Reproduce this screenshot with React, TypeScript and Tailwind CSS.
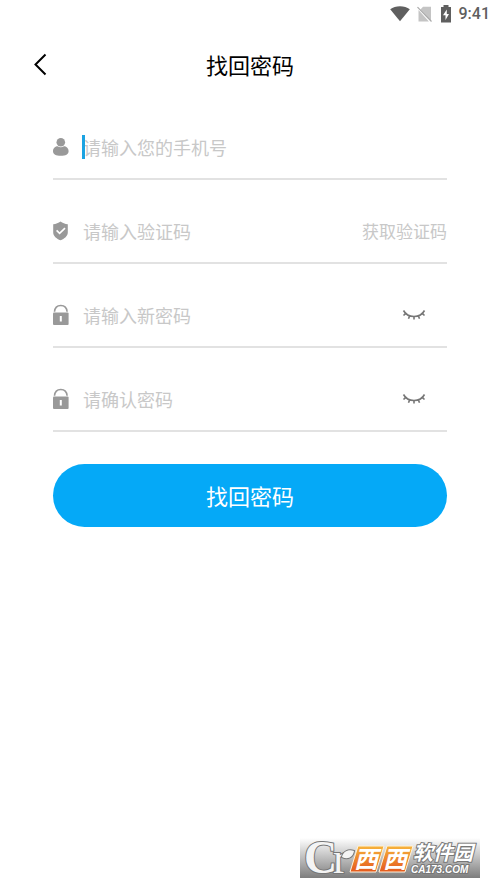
import React, { useState } from "react";

const UserIcon = () => (
  <svg viewBox="0 0 16 20" className="h-5 w-4" fill="#999999" aria-hidden="true">
    <circle cx="7.8" cy="5.2" r="4.3" />
    <path d="M0 14.200C0 10.900 2.600 9.300 4.600 9.200c2 1.300 4.400 1.300 6.400 0 2 .1 4.600 1.700 4.600 5 0 2.900-3 4.600-7.800 4.600S0 17.100 0 14.200Z" />
  </svg>
);

const ShieldIcon = () => (
  <svg viewBox="0 0 16 20" className="h-5 w-4" aria-hidden="true">
    <path
      d="M7.500.5c2 1.500 4.500 2.500 7.300 2.700v8.200c0 3.600-3.300 6.100-7.300 7.900C3.500 17.500.2 15 .2 11.400V3.200C3 3 5.500 2 7.500.5Z"
      fill="#999999"
    />
    <path d="m3.600 9.400 3 3 5.400-5.200" fill="none" stroke="#fff" strokeWidth="1.600" />
  </svg>
);

const LockIcon = () => (
  <svg viewBox="0 0 16 22" className="h-[22px] w-4" aria-hidden="true">
    <path
      d="M1.500 7.800C1.800 3.800 4.300 1.500 7.800 1.500s6 2.300 6.300 6.300"
      fill="none"
      stroke="#999999"
      strokeWidth="1.600"
    />
    <rect x="0" y="8.500" width="15.600" height="12.500" rx="1" fill="#999999" />
    <rect x="6.800" y="12" width="2" height="5.500" fill="#fff" />
  </svg>
);

const ClosedEyeIcon = () => (
  <svg
    viewBox="0 0 24 14"
    className="h-[14px] w-6"
    fill="none"
    stroke="#777777"
    strokeWidth="1.600"
    aria-hidden="true"
  >
    <path d="M1.500 2.500C3.500 6.200 7.500 8.500 12 8.500s8.500-2.300 10.500-6" />
    <path d="M3.800 5.300 1.500 7.500M7.800 7.500 6.500 10.700M12 8.500v3M16.200 7.500l1.300 3.200M20.200 5.300 22.500 7.500" />
  </svg>
);

const StatusBar = () => (
  <div className="flex h-7 items-center justify-end pr-[10px] text-[#5f5f5f]">
    <svg viewBox="0 0 20 16" className="mr-[7px] h-4 w-5" fill="currentColor" aria-hidden="true">
      <path d="M10 15.300.2 3.200C2.900 1.200 6.200.2 10 .2s7.100 1 9.800 3L10 15.300Z" />
    </svg>
    <svg viewBox="0 0 16 16" className="mr-[7px] h-4 w-4" aria-hidden="true">
      <path d="M3.500 3.500 6 .8h8v14.400L3.500 3.500ZM1.500 4l10.400 11.400H1.500V4Z" fill="#c4c4c4" />
      <path d="m.5 1.200 14 14.300" stroke="#aaaaaa" strokeWidth="1.200" />
    </svg>
    <svg viewBox="0 0 12 18" className="mr-[7px] h-[18px] w-3" aria-hidden="true">
      <path d="M3.500 0h5v2H11v15.500H1V2h2.500V0Z" fill="currentColor" />
      <path d="M6.800 4.500 3 10.300h2.500V15L9 9H6.800V4.500Z" fill="#fff" />
    </svg>
    <span className="font-['Roboto',sans-serif] text-base font-medium">9:41</span>
  </div>
);

type FieldProps = {
  id: string;
  type: string;
  placeholder: string;
  icon: React.ReactNode;
  caret?: boolean;
  children?: React.ReactNode;
};

const Field = ({ id, type, placeholder, icon, caret, children }: FieldProps) => {
  const [value, setValue] = useState("");

  return (
    <div className="flex h-16 items-center border-b-2 border-[#e2e2e2]">
      <label htmlFor={id} aria-label={placeholder} className="mr-[14px] shrink-0">
        {icon}
      </label>
      <div className="relative min-w-0 flex-1">
        <input
          id={id}
          type={type}
          value={value}
          onChange={(e) => setValue(e.target.value)}
          placeholder={placeholder}
          className="block w-full bg-transparent text-lg text-[#333333] outline-none placeholder:text-[#c8c8c8]"
        />
        {caret && !value && (
          <span className="pointer-events-none absolute inset-y-[2px] -left-px w-[3px] bg-[#1ba3e2]" />
        )}
      </div>
      {children}
    </div>
  );
};

const PasswordField = (props: { id: string; placeholder: string }) => {
  const [visible, setVisible] = useState(false);

  return (
    <Field {...props} type={visible ? "text" : "password"} icon={<LockIcon />}>
      <button
        type="button"
        aria-label="显示密码"
        aria-pressed={visible}
        onClick={() => setVisible((prev) => !prev)}
        className="mr-[21px]"
      >
        <ClosedEyeIcon />
      </button>
    </Field>
  );
};

const SiteLogo = () => (
  <svg
    viewBox="0 0 180 40"
    className="h-10 w-[180px] overflow-visible"
    role="img"
    aria-label="西西软件园"
  >
    <defs>
      <linearGradient id="shade" x1="0" y1="0" x2="0" y2="1">
        <stop offset="0" stopColor="#ffffff" />
        <stop offset="1" stopColor="#7d7d7d" />
      </linearGradient>
      <linearGradient id="orange" x1="0" y1="0" x2="0" y2="1">
        <stop offset="0" stopColor="#f6b33c" />
        <stop offset="1" stopColor="#e4591d" />
      </linearGradient>
    </defs>
    <rect width="180" height="40" fill="url(#shade)" />
    <g fill="#f4f4f4" stroke="#777777" strokeWidth="2" paintOrder="stroke">
      <text x="4" y="35" fontSize="46" fontWeight="700" fontFamily="'Liberation Serif', serif">
        C
        <tspan x="33" fontSize="44" fontWeight="400">
          r
        </tspan>
      </text>
      <path d="M42 19c1-5 6-8 12-6-1 6-6 9-12 6Z" />
    </g>
    <g fill="url(#orange)" stroke="#fff3dc" strokeWidth="1">
      <path d="M58 8h26l-8 26H50Z" />
      <path d="M87 8h26l-8 26H79Z" />
    </g>
    <text
      x="54"
      y="30"
      fontSize="24"
      fill="#fff"
      fontFamily="'Noto Sans CJK SC', sans-serif"
      fontWeight="700"
      fontStyle="italic"
    >
      西<tspan x="83">西</tspan>
    </text>
    <text
      fill="#fff"
      stroke="#777777"
      strokeWidth="2"
      paintOrder="stroke"
      fontWeight="700"
      fontStyle="italic"
    >
      <tspan x="113" y="22" fontSize="20" fontFamily="'Noto Sans CJK SC', sans-serif">
        软件园
      </tspan>
      <tspan x="111" y="35" fontSize="10" fontFamily="'Liberation Sans', sans-serif">
        CA173.COM
      </tspan>
    </text>
  </svg>
);

const App = () => (
  <div className="flex min-h-screen flex-col bg-white font-['Noto_Sans_CJK_SC',sans-serif]">
    <StatusBar />

    <header className="grid h-[72px] grid-cols-[1fr_auto_1fr] items-center px-8">
      <button type="button" aria-label="返回" className="justify-self-start">
        <svg viewBox="0 0 16 24" className="h-6 w-4" fill="none" stroke="#000" strokeWidth="2" aria-hidden="true">
          <path d="m13.500 2.500-10 10 10 10" />
        </svg>
      </button>
      <h1 className="text-[22px] text-black">找回密码</h1>
    </header>

    <main className="px-[53px] pt-4">
      <form onSubmit={(e) => e.preventDefault()}>
        <div className="flex flex-col gap-5">
          <Field id="phone" type="tel" placeholder="请输入您的手机号" icon={<UserIcon />} caret />
          <Field id="code" type="text" placeholder="请输入验证码" icon={<ShieldIcon />}>
            <button type="button" className="shrink-0 text-[17px] text-[#c8c8c8]">
              获取验证码
            </button>
          </Field>
          <PasswordField id="password" placeholder="请输入新密码" />
          <PasswordField id="confirm" placeholder="请确认密码" />
        </div>

        <button
          type="submit"
          className="mt-8 h-[63px] w-full rounded-full bg-[#05a9f7] text-[22px] text-white"
        >
          找回密码
        </button>
      </form>
    </main>

    <footer className="mt-auto flex justify-end pr-5 pb-[10px]">
      <SiteLogo />
    </footer>
  </div>
);

export default App;
